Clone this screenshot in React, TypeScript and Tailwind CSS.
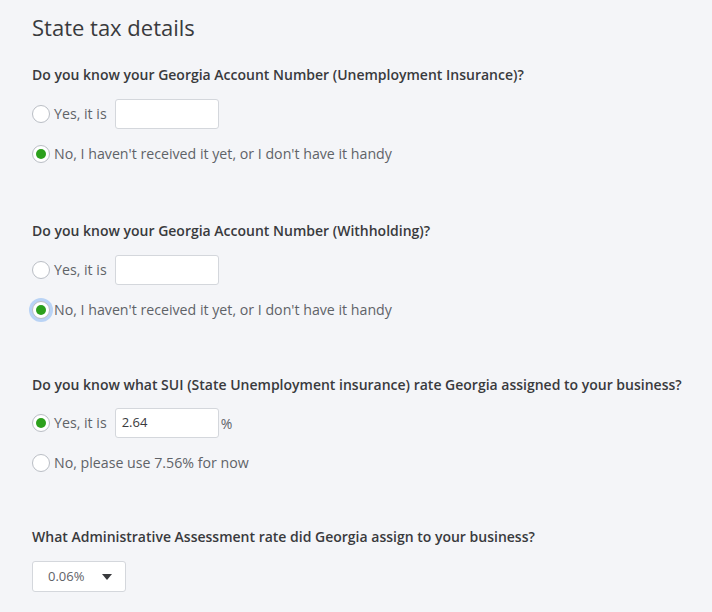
import React from 'react';

const Radio = ({ checked, focused }: { checked?: boolean; focused?: boolean }) => (
  <span
    className={
      'flex h-[18px] w-[18px] shrink-0 items-center justify-center rounded-full border border-[#babec5] bg-white ' +
      (focused ? 'ring-[3px] ring-[#b9d3f5]' : '')
    }
  >
    {checked && <span className="h-[10px] w-[10px] rounded-full bg-[#2ca01c]" />}
  </span>
);

const Option = ({
  label,
  checked,
  focused,
  children
}: {
  label: string;
  checked?: boolean;
  focused?: boolean;
  children?: React.ReactNode;
}) => (
  <div className="flex h-[30px] items-center">
    <Radio checked={checked} focused={focused} />
    <span className="ml-[4px] text-[14.2px] text-[#5f6368]">{label}</span>
    {children}
  </div>
);

const TextBox = ({ value }: { value?: string }) => (
  <div className="ml-[8px] flex h-[30px] w-[104px] items-center rounded-[3px] border border-[#d4d7dc] bg-white px-[6px] text-[13px] text-[#393a3d]">
    {value}
  </div>
);

const Question = ({ children }: { children: React.ReactNode }) => (
  <div className="text-[14px] leading-[20px] font-semibold text-[#393a3d]">{children}</div>
);

export default function App() {
  return (
    <div
      className="min-h-[612px] w-[712px] bg-[#f4f5f8] pl-[32px] pt-[13px]"
      style={{ fontFamily: '"Open Sans", Lato, sans-serif' }}
    >
      <h1 className="text-[22px] leading-[28px] text-[#393a3d]">State tax details</h1>

      <div className="mt-[24px]">
        <Question>Do you know your Georgia Account Number (Unemployment Insurance)?</Question>
        <div className="mt-[14px] flex flex-col gap-[10px]">
          <Option label="Yes, it is">
            <TextBox />
          </Option>
          <Option label="No, I haven't received it yet, or I don't have it handy" checked />
        </div>
      </div>

      <div className="mt-[52px]">
        <Question>Do you know your Georgia Account Number (Withholding)?</Question>
        <div className="mt-[14px] flex flex-col gap-[10px]">
          <Option label="Yes, it is">
            <TextBox />
          </Option>
          <Option label="No, I haven't received it yet, or I don't have it handy" checked focused />
        </div>
      </div>

      <div className="mt-[50px]">
        <Question>Do you know what SUI (State Unemployment insurance) rate Georgia assigned to your business?</Question>
        <div className="mt-[13px] flex flex-col gap-[10px]">
          <Option label="Yes, it is" checked>
            <TextBox value="2.64" />
            <span className="ml-[2px] text-[14px] text-[#5f6368]">%</span>
          </Option>
          <Option label="No, please use 7.56% for now" />
        </div>
      </div>

      <div className="mt-[49px]">
        <Question>What Administrative Assessment rate did Georgia assign to your business?</Question>
        <div className="mt-[14px] flex h-[31px] w-[94px] items-center justify-between rounded-[3px] border border-[#d4d7dc] bg-white pl-[15px] pr-[13px] text-[13px] text-[#5f6368]">
          <span>0.06%</span>
          <svg width="10" height="6" viewBox="0 0 10 6">
            <path d="M0 0h10L5 6z" fill="#393a3d" />
          </svg>
        </div>
      </div>
    </div>
  );
}
